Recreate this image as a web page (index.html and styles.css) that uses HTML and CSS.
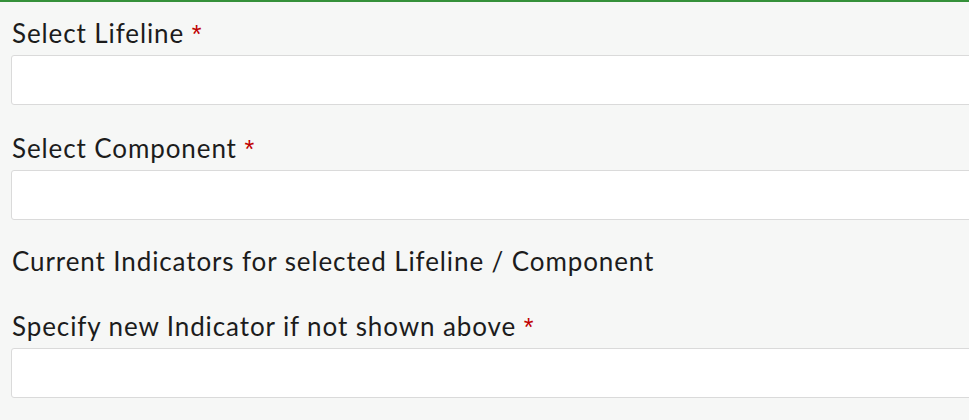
FILE: index.html
```html
<!DOCTYPE html>
<html>
<head>
<meta charset="utf-8">
<link rel="stylesheet" href="styles.css">
</head>
<body>
<div class="form">
  <div class="field">
    <label class="label">Select Lifeline <span class="req">*</span></label>
    <div class="input"></div>
  </div>
  <div class="field">
    <label class="label">Select Component <span class="req">*</span></label>
    <div class="input"></div>
  </div>
  <div class="field field-text">
    <div class="label">Current Indicators for selected Lifeline / Component</div>
  </div>
  <div class="field">
    <label class="label">Specify new Indicator if not shown above <span class="req">*</span></label>
    <div class="input"></div>
  </div>
</div>
</body>
</html>
```

FILE: styles.css
```css
html, body {
  margin: 0;
  padding: 0;
  background: #f6f7f6;
  overflow: hidden;
}
body {
  width: 969px;
  height: 420px;
  border-top: 2px solid #35913a;
  box-sizing: border-box;
  font-family: Lato, "Noto Sans", sans-serif;
  color: #1c1c1c;
}
.form {
  padding: 13px 0 0 11px;
  display: flex;
  flex-direction: column;
  gap: 25px;
}
.field {
  display: flex;
  flex-direction: column;
}
.field-text {
  margin-top: -2px;
}
.label {
  display: block;
  font-size: 26px;
  line-height: 36px;
  height: 36px;
  letter-spacing: 0.9px;
  padding-left: 1px;
  margin-bottom: 4px;
}
.req {
  color: #c00000;
  font-family: "Liberation Sans", Arial, sans-serif;
  font-size: 25px;
  line-height: 0;
  letter-spacing: 0;
}
.input {
  width: 1000px;
  height: 48px;
  background: #fff;
  border: 1px solid #dadada;
  border-radius: 3px;
}
```
